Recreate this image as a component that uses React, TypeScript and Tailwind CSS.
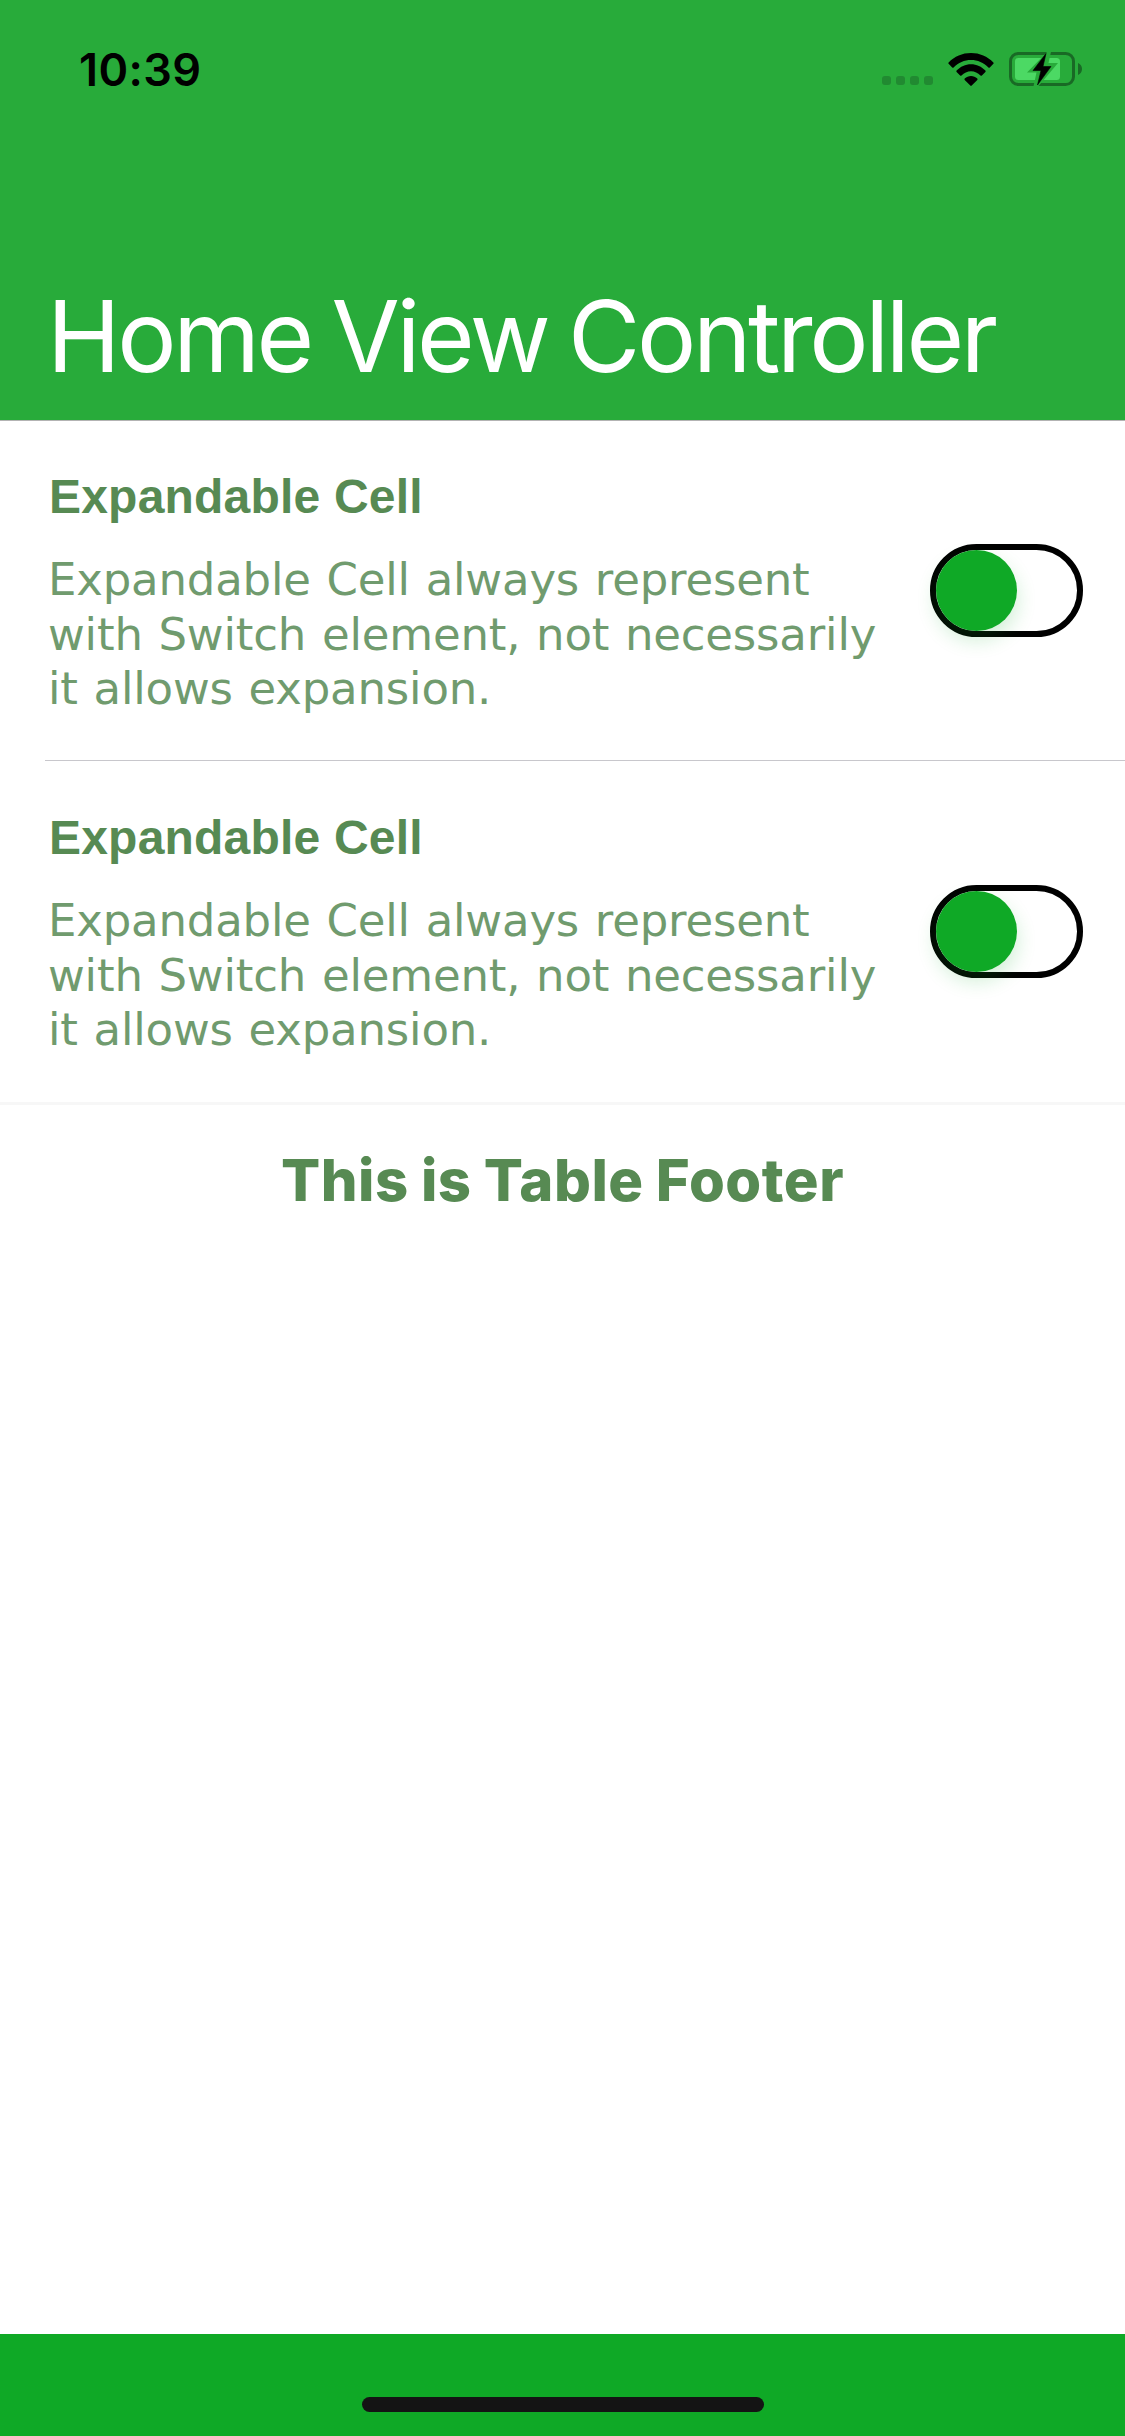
function StatusIcons() {
  return (
    <div className="flex items-center">
      <div className="mt-[23px] mr-[15px] flex gap-[5px]">
        {[0, 1, 2, 3].map((i) => (
          <span key={i} className="size-[9px] rounded-[3px] bg-[#218a31]" />
        ))}
      </div>
      <svg className="mr-[15px] h-[33px] w-[46px]" viewBox="0 0 46 33">
        <path d="M0.6 9.4C6.5 3.4 14.3 0 23 0s16.500 3.400 22.400 9.400c.4.400.4 1 0 1.400l-3.600 3.600c-.4.400-1 .4-1.400 0C35.700 9.700 29.600 7.100 23 7.100S10.300 9.700 5.600 14.400c-.4.400-1 .4-1.400 0L.6 10.800c-.4-.4-.4-1 0-1.400z" />
        <path d="M8.600 17.600C12.400 13.600 17.400 11.200 23 11.200s10.600 2.400 14.400 6.400c.4.400.4 1 0 1.400l-3.500 3.500c-.4.400-1 .4-1.400 0C29.900 19.800 26.700 18.200 23 18.200s-6.900 1.600-9.500 4.300c-.4.400-1 .4-1.400 0L8.600 19c-.4-.4-.4-1 0-1.400z" />
        <path d="M16.700 25.600C18.400 24 20.600 22.900 23 22.900s4.600 1.100 6.300 2.700c.4.400.4 1 0 1.400l-5.600 5.600c-.4.400-1 .4-1.400 0L16.700 27c-.4-.4-.4-1 0-1.400z" />
      </svg>
      <svg className="h-[34px] w-[74px]" viewBox="0 0 74 34">
        <rect x="1.500" y="1.500" width="63" height="31" rx="7.800" fill="none" stroke="#196a25" strokeWidth="3" />
        <path d="M69 11c2.400 1 4 3.300 4 6s-1.600 5-4 6z" fill="#196a25" />
        <rect x="6" y="6" width="45" height="22" rx="3.500" fill="#4cd964" />
        <path d="M40.500 -2.500L18 20.500h9.500L24 36.500h3.500L49 11h-9.500L42.500 -2.500z" fill="#28ab3a" />
        <path d="M37 1.500L24 18.500h8L28.500 33L42 14.500h-8z" stroke="#000" strokeWidth=".6" strokeLinejoin="round" />
      </svg>
    </div>
  );
}

function Switch() {
  return (
    <button
      role="switch"
      aria-checked="false"
      aria-label="Expand"
      className="mt-[74px] h-[93px] w-[153px] shrink-0 rounded-full border-[6px] border-black bg-white"
    >
      <span className="block size-[81px] rounded-full bg-[#0fa926] shadow-[0_9px_20px_rgba(15,169,38,0.2)]" />
    </button>
  );
}

function ExpandableCell({ divider }: { divider?: boolean }) {
  return (
    <li className="relative flex h-[341px] items-start justify-between pt-[50px] pr-[42px] pl-12">
      <div className="w-[840px]">
        <h2 className="pl-px font-['Liberation_Sans',sans-serif] text-[48px] leading-[53px] font-bold tracking-[0.2px] text-[#578a53]">
          Expandable Cell
        </h2>
        <p className="mt-[30px] font-['DejaVu_Sans',sans-serif] text-[45px] leading-[54.600px] tracking-[-0.180px] text-[#709b6e] [word-spacing:1.600px]">
          Expandable Cell always represent
          <br />
          with Switch element, not necessarily
          <br />
          it allows expansion.
        </p>
      </div>
      <Switch />
      {divider && <span className="absolute right-0 bottom-0 left-[45px] h-px bg-[#c8c7cc]" />}
    </li>
  );
}

export default function App() {
  return (
    <div className="flex h-[2436px] w-[1125px] flex-col overflow-hidden bg-white font-['Inter',sans-serif]">
      <header className="relative h-[420px] shrink-0 bg-[#28ab3a] shadow-[0_1px_0_#b3b3b3]">
        <div className="flex h-[138px] items-center justify-between pr-[42px] pl-[79px]">
          <time className="text-[45px] leading-[55px] font-semibold tracking-[0.4px] text-black">10:39</time>
          <StatusIcons />
        </div>
        <h1 className="mt-[138px] pl-[47px] text-[99px] leading-[120px] font-normal tracking-[-3.400px] whitespace-nowrap text-white [word-spacing:-3.600px]">
          Home View Controller
        </h1>
      </header>
      <main className="flex-1">
        <ul>
          <ExpandableCell divider />
          <ExpandableCell />
        </ul>
        <footer className="border-t-[3px] border-[#f7f7f7] pt-10 text-center text-[58px] leading-[70px] font-extrabold tracking-[0.500px] text-[#578a53] [word-spacing:-1px]">
          This is Table Footer
        </footer>
      </main>
      <div className="flex h-[102px] shrink-0 items-end justify-center bg-[#0fa926] pb-6">
        <span className="h-[15px] w-[402px] rounded-full bg-[#141414]" />
      </div>
    </div>
  );
}
